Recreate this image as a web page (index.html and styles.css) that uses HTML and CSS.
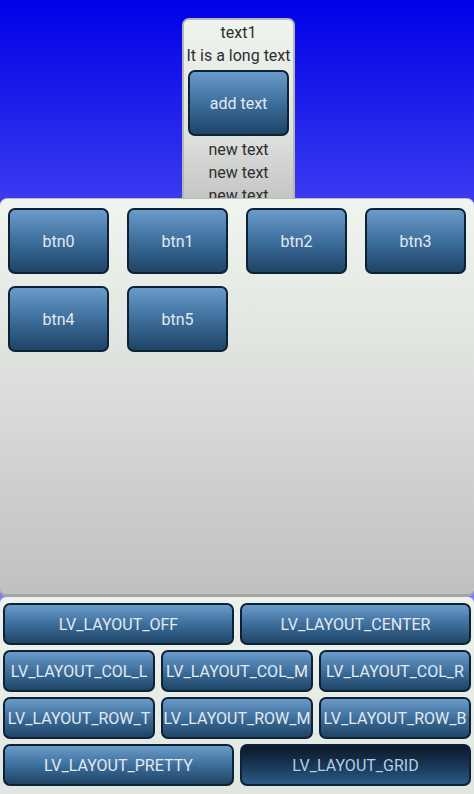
FILE: index.html
```html
<!DOCTYPE html>
<html>
<head>
<meta charset="utf-8">
<link rel="stylesheet" href="styles.css">
</head>
<body>
<div class="screen">
  <div class="top">
    <div class="cont">
      <div class="lbl">text1</div>
      <div class="lbl">It is a long text</div>
      <div class="btn add">add text</div>
      <div class="lbl">new text</div>
      <div class="lbl">new text</div>
      <div class="lbl">new text</div>
    </div>
  </div>
  <div class="mid">
    <div class="btn mb">btn0</div>
    <div class="btn mb">btn1</div>
    <div class="btn mb">btn2</div>
    <div class="btn mb">btn3</div>
    <div class="btn mb">btn4</div>
    <div class="btn mb">btn5</div>
  </div>
  <div class="bot">
    <div class="btn lb half">LV_LAYOUT_OFF</div>
    <div class="btn lb half">LV_LAYOUT_CENTER</div>
    <div class="btn lb third">LV_LAYOUT_COL_L</div>
    <div class="btn lb third">LV_LAYOUT_COL_M</div>
    <div class="btn lb third">LV_LAYOUT_COL_R</div>
    <div class="btn lb third">LV_LAYOUT_ROW_T</div>
    <div class="btn lb third">LV_LAYOUT_ROW_M</div>
    <div class="btn lb third">LV_LAYOUT_ROW_B</div>
    <div class="btn lb half">LV_LAYOUT_PRETTY</div>
    <div class="btn lb half tgl">LV_LAYOUT_GRID</div>
  </div>
</div>
</body>
</html>
```
FILE: styles.css
```css
html, body { margin: 0; padding: 0; }
body {
  width: 474px;
  height: 794px;
  overflow: hidden;
  font-family: Roboto, "Open Sans", sans-serif;
  background: linear-gradient(#0000e8 0px, #3a3af0 198px, #8080f6 500px);
}
.screen { display: flex; flex-direction: column; height: 794px; }
.top {
  height: 198px;
  overflow: hidden;
  display: flex;
  justify-content: center;
  padding-left: 3px;
  box-sizing: border-box;
}
.cont {
  margin-top: 18px;
  width: 113px;
  height: 260px;
  box-sizing: border-box;
  border: 2px solid #b4b8b4;
  border-radius: 7px;
  background: linear-gradient(#f0f4ef 0px, #dfe3df 110px, #c4c4c4 180px);
  display: flex;
  flex-direction: column;
  align-items: center;
  padding: 1px 3px 0;
}
.lbl {
  font-size: 16px;
  line-height: 23px;
  color: #2e2e2e;
  white-space: nowrap;
}
.btn {
  box-sizing: border-box;
  border: 2px solid #0e2236;
  border-radius: 7px;
  background: linear-gradient(#6a9bca 0%, #3a6a96 55%, #1f4466 100%);
  color: #e2eaf2;
  font-size: 16px;
  display: flex;
  align-items: center;
  justify-content: center;
  white-space: nowrap;
}
.add { width: 101px; height: 66px; margin: 3px 0 2px; }
.mid {
  height: 399px;
  box-sizing: border-box;
  border-radius: 7px;
  border-top: 1px solid #b8bcb8;
  border-bottom: 3px solid #a4a6a4;
  background: linear-gradient(#f1f5f0 0%, #e4e8e3 30%, #c0c0c0 100%);
  display: grid;
  grid-template-columns: repeat(4, 101px);
  grid-auto-rows: 66px;
  column-gap: 18px;
  row-gap: 12px;
  align-content: start;
  padding: 9px 0 0 8px;
}
.bot {
  flex: 1;
  border-radius: 6px 6px 0 0;
  background: linear-gradient(#eef2ed, #e2e6e1);
  display: grid;
  grid-template-columns: repeat(6, 1fr);
  grid-auto-rows: 42px;
  column-gap: 6px;
  row-gap: 5px;
  padding: 6px 3px 0 3px;
}
.lb { font-size: 16px; }
.half { grid-column: span 3; }
.third { grid-column: span 2; }
.tgl {
  background: linear-gradient(#0b1828 0%, #193656 50%, #2b5a88 100%);
  color: #b8cde0;
}
```
